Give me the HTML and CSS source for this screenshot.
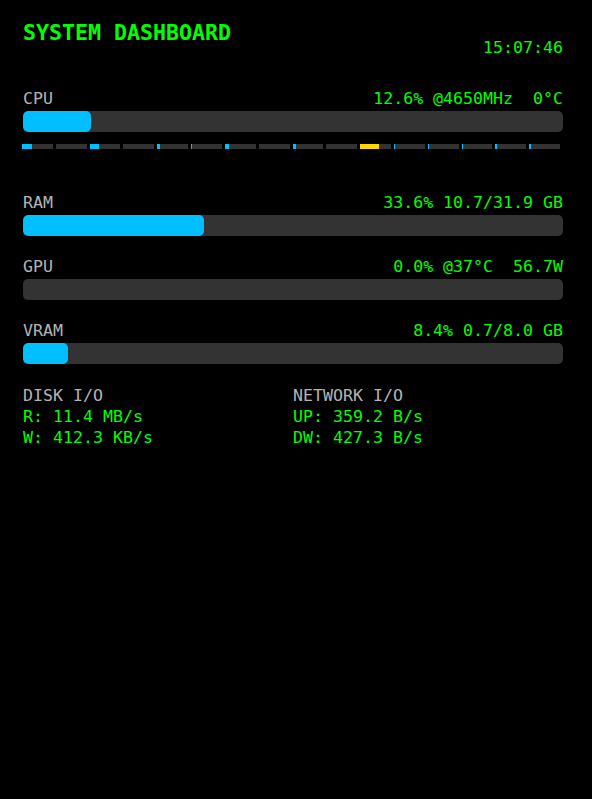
FILE: index.html
```html
<!DOCTYPE html>
<html>
<head>
<meta charset="utf-8">
<title>System Dashboard</title>
<link rel="stylesheet" href="styles.css">
</head>
<body>
<div class="dash">
  <header class="header">
    <h1 class="title">SYSTEM DASHBOARD</h1>
    <div class="time">15:07:46</div>
  </header>

  <section class="metric metric-cpu">
    <div class="row"><span class="label">CPU</span><span class="value">12.6% @4650MHz&nbsp;&nbsp;0°C</span></div>
    <div class="bar"><div class="fill" style="width:12.6%"></div></div>
    <div class="cores">
      <div class="core"><div class="core-fill" style="width:32%"></div></div>
      <div class="core"><div class="core-fill" style="width:0%"></div></div>
      <div class="core"><div class="core-fill" style="width:29%"></div></div>
      <div class="core"><div class="core-fill" style="width:0%"></div></div>
      <div class="core"><div class="core-fill" style="width:10%"></div></div>
      <div class="core"><div class="core-fill" style="width:3%"></div></div>
      <div class="core"><div class="core-fill" style="width:13%"></div></div>
      <div class="core"><div class="core-fill" style="width:0%"></div></div>
      <div class="core"><div class="core-fill" style="width:10%"></div></div>
      <div class="core"><div class="core-fill" style="width:0%"></div></div>
      <div class="core"><div class="core-fill hot" style="width:61%"></div></div>
      <div class="core"><div class="core-fill" style="width:3%"></div></div>
      <div class="core"><div class="core-fill" style="width:3%"></div></div>
      <div class="core"><div class="core-fill" style="width:3%"></div></div>
      <div class="core"><div class="core-fill" style="width:4%"></div></div>
      <div class="core"><div class="core-fill" style="width:6%"></div></div>
    </div>
  </section>

  <section class="metric">
    <div class="row"><span class="label">RAM</span><span class="value">33.6% 10.7/31.9 GB</span></div>
    <div class="bar"><div class="fill" style="width:33.6%"></div></div>
  </section>

  <section class="metric">
    <div class="row"><span class="label">GPU</span><span class="value">0.0% @37°C&nbsp;&nbsp;56.7W</span></div>
    <div class="bar"><div class="fill" style="width:0%"></div></div>
  </section>

  <section class="metric">
    <div class="row"><span class="label">VRAM</span><span class="value">8.4% 0.7/8.0 GB</span></div>
    <div class="bar"><div class="fill" style="width:8.4%"></div></div>
  </section>

  <section class="io">
    <div class="io-col">
      <div class="label">DISK I/O</div>
      <div class="value">R: 11.4 MB/s</div>
      <div class="value">W: 412.3 KB/s</div>
    </div>
    <div class="io-col">
      <div class="label">NETWORK I/O</div>
      <div class="value">UP: 359.2 B/s</div>
      <div class="value">DW: 427.3 B/s</div>
    </div>
  </section>
</div>
</body>
</html>
```

FILE: styles.css
```css
html, body {
  margin: 0;
  padding: 0;
  background: #000;
}

body {
  font-family: "DejaVu Sans Mono", "Liberation Mono", monospace;
  font-size: 16.6px;
  line-height: 21px;
  color: #00ff00;
}

.dash {
  width: 540px;
  margin-left: 23px;
  padding-top: 20px;
}

.header {
  display: flex;
  justify-content: space-between;
  align-items: flex-start;
  height: 68px;
}

.title {
  margin: 0;
  font-size: 21.6px;
  line-height: 26px;
  font-weight: bold;
  color: #00ff00;
}

.time {
  margin-top: 17px;
  color: #00ff00;
}

.metric {
  margin-bottom: 20px;
}

.row {
  display: flex;
  justify-content: space-between;
  align-items: baseline;
  margin-bottom: 2px;
}

.label {
  color: #b4b4b4;
}

.value {
  color: #00ff00;
  white-space: pre;
}

.bar {
  height: 21px;
  background: #333;
  border-radius: 5px;
  overflow: hidden;
}

.fill {
  height: 100%;
  background: #00bfff;
  border-radius: 5px;
}

.cores {
  display: flex;
  gap: 3px;
  width: 538px;
  margin-left: -1px;
  margin-top: 12px;
  margin-bottom: 43px;
}

.core {
  flex: 1;
  height: 5px;
  background: #333;
}

.core-fill {
  height: 100%;
  background: #00bfff;
}

.core-fill.hot {
  background: #ffd700;
}

.io {
  display: grid;
  grid-template-columns: 1fr 1fr;
  padding-top: 1px;
}
```
